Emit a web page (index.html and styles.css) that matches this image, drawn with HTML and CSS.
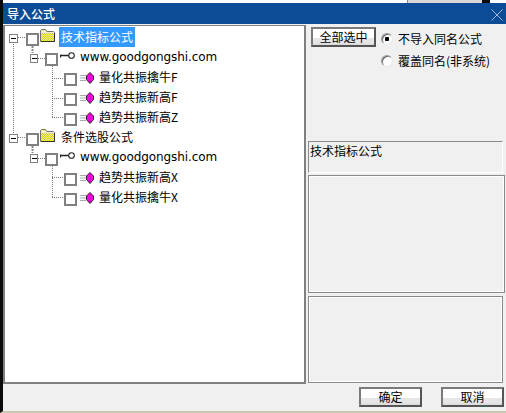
FILE: index.html
```html
<!DOCTYPE html>
<html lang="zh">
<head>
<meta charset="utf-8">
<title>导入公式</title>
<link rel="stylesheet" href="styles.css">
</head>
<body>
<svg width="0" height="0" class="defs" aria-hidden="true">
  <defs>
    <pattern id="dither" width="2" height="2" patternUnits="userSpaceOnUse">
      <rect width="2" height="2" fill="#ffff30"/>
      <rect width="1" height="1" fill="#c8c870"/>
      <rect x="1" y="1" width="1" height="1" fill="#c8c870"/>
    </pattern>
    <symbol id="folder" viewBox="0 0 15 13">
      <path d="M0.5 12.5V1.500L1.500 0.5H5.500L7 2.500H13.500L14.500 3.500V12.500Z" fill="url(#dither)" stroke="#707070"/>
      <path d="M1 1.500H5.500L6.500 3H14V4H1Z" fill="#efecd8"/>
      <path d="M14.500 4V12.500H1" fill="none" stroke="#333"/>
    </symbol>
    <symbol id="key" viewBox="0 0 15 7">
      <circle cx="11.500" cy="3.500" r="2.800" fill="#fff" stroke="#222" stroke-width="1.100"/>
      <path d="M0.500 2.500V5.500M0.500 3.500H8.500" stroke="#222" stroke-width="1.300" fill="none"/>
    </symbol>
    <symbol id="gem" viewBox="0 0 14 12">
      <path d="M0 3.500H6M0 6H6M0 8.500H6" stroke="#aaa" fill="none"/>
      <path d="M10 0.500L13.500 4V7.500L10 11.500L6.500 7.500V4Z" fill="#ff00e6" stroke="#222"/>
      <path d="M10 2V10" stroke="#a000a0" stroke-width="0.700" fill="none"/>
    </symbol>
  </defs>
</svg>
<div class="strip">
  <span class="strip-text">超势共振新高型</span>
  <span class="strip-box"></span>
</div>
<div class="titlebar">
  <span class="title">导入公式</span>
  <svg class="close" width="12" height="12" viewBox="0 0 12 12"><path d="M0.500 0.500L11.500 11.500M11.500 0.500L0.500 11.500" stroke="#9db8d6" fill="none"/></svg>
</div>
<main class="body">
  <div class="tree">
    <svg class="lines" width="299" height="356" viewBox="5 26 299 356">
      <path class="dots" d="M13.500 42V134M18 37.500H27M18 137.500H27M38 58.500H45M38 158.500H45M52.500 66V117.500M52 78.500H64M52 98.500H64M52 117.500H64M52.500 166V197.500M52 177.500H64M52 197.500H64"/>
      <path class="dots strong" d="M32.500 46V53M32.500 146V153"/>
    </svg>
    <div class="row root">
      <span class="exp"></span><span class="chk"></span>
      <svg class="ico-folder"><use href="#folder"/></svg>
      <span class="label sel">技术指标公式</span>
    </div>
    <div class="row site">
      <span class="exp"></span><span class="chk"></span>
      <svg class="ico-key"><use href="#key"/></svg>
      <span class="label url">www.goodgongshi.com</span>
    </div>
    <div class="row leaf"><span class="chk"></span><svg class="ico-gem"><use href="#gem"/></svg><span class="label">量化共振擒牛F</span></div>
    <div class="row leaf"><span class="chk"></span><svg class="ico-gem"><use href="#gem"/></svg><span class="label">趋势共振新高F</span></div>
    <div class="row leaf"><span class="chk"></span><svg class="ico-gem"><use href="#gem"/></svg><span class="label">趋势共振新高Z</span></div>
    <div class="row root">
      <span class="exp"></span><span class="chk"></span>
      <svg class="ico-folder"><use href="#folder"/></svg>
      <span class="label">条件选股公式</span>
    </div>
    <div class="row site">
      <span class="exp"></span><span class="chk"></span>
      <svg class="ico-key"><use href="#key"/></svg>
      <span class="label url">www.goodgongshi.com</span>
    </div>
    <div class="row leaf"><span class="chk"></span><svg class="ico-gem"><use href="#gem"/></svg><span class="label">趋势共振新高X</span></div>
    <div class="row leaf"><span class="chk"></span><svg class="ico-gem"><use href="#gem"/></svg><span class="label">量化共振擒牛X</span></div>
  </div>
  <aside class="side">
    <div class="controls">
      <button class="btn btn-all" type="button">全部选中</button>
      <div class="radios">
        <div class="radio-row"><span class="radio on"></span><span>不导入同名公式</span></div>
        <div class="radio-row"><span class="radio"></span><span>覆盖同名(非系统)</span></div>
      </div>
    </div>
    <div class="box box-info">技术指标公式</div>
    <div class="box box-mid"></div>
    <div class="box box-low"></div>
  </aside>
</main>
<footer class="actions">
  <button class="btn btn-act" type="button">确定</button>
  <button class="btn btn-act" type="button">取消</button>
</footer>
</body>
</html>
```
FILE: styles.css
```css
* { box-sizing: border-box; }
html, body { margin: 0; padding: 0; }
body {
  width: 506px;
  height: 413px;
  overflow: hidden;
  background: #f0f0f0;
  border-left: 3px solid #0a0a0a;
  border-bottom: 2px solid #c9c6b4;
  font: 12px/20px "Noto Sans CJK SC", "Liberation Sans", sans-serif;
  color: #000;
}
.defs { position: absolute; }
.strip {
  height: 3px;
  margin-left: -3px;
  background: #fff;
  display: flex;
  overflow: hidden;
  border-left: 3px solid #0a0a0a;
}
.strip-text {
  margin-left: 79px;
  margin-top: -17px;
  line-height: 20px;
  height: 20px;
}
.strip-box {
  margin-left: auto;
  margin-right: 16px;
  width: 83px;
  background: #d8d8d8;
  border-left: 1px solid #888;
  border-right: 8px solid #0a0a0a;
}
.titlebar {
  height: 21px;
  margin-left: -3px;
  background: #0c4c96;
  display: flex;
  align-items: center;
  justify-content: space-between;
  padding: 0 3px 0 7px;
  color: #fff;
}
.title { font-weight: 500; }
.close { margin-top: 2px; }
.body {
  display: flex;
  gap: 2px;
  height: 359px;
  padding-top: 1px;
}
.tree {
  position: relative;
  width: 303px;
  height: 359px;
  background: #fff;
  border: 1px solid #808080;
  border-width: 1px 2px 2px 2px;
  padding-top: 1px;
}
.lines { position: absolute; left: 0; top: 0; pointer-events: none; }
.dots { fill: none; stroke: #777; stroke-dasharray: 1 1; }
.dots.strong { stroke-width: 2; stroke-dasharray: 2 1; stroke: #888; }
.row { display: flex; align-items: flex-start; height: 20px; position: relative; }
.root { padding-left: 4px; }
.site { padding-left: 24px; }
.leaf { padding-left: 59px; }
.exp {
  width: 9px;
  height: 9px;
  margin-top: 7px;
  margin-right: 9px;
  background: linear-gradient(#000, #000) center / 5px 1px no-repeat #fff;
  border: 1px solid #808080;
}
.site .exp { margin-right: 7px; width: 8px; margin-left: 1px; margin-right: 7px; }
.chk {
  width: 13px;
  height: 13px;
  margin-top: 6px;
  background: #fff;
  border: 2px solid #808080;
}
.root .chk { margin-left: -1px; }
.ico-folder { width: 15px; height: 13px; margin-top: 2px; margin-left: 1px; }
.ico-key { width: 15px; height: 7px; margin: 5px 5px 0 2px; }
.ico-gem { width: 14px; height: 12px; margin: 5px 5px 0 3px; }
.root .label { margin-left: 4px; padding: 0 2px; }
.label { line-height: 20px; white-space: nowrap; }
.sel { background: #3399ff; color: #fff; }
.url { font-family: "DejaVu Sans", sans-serif; font-size: 12px; letter-spacing: -0.1px; }
.side { width: 197px; display: flex; flex-direction: column; }
.controls { height: 115px; display: flex; align-items: flex-start; padding: 2px 0 0 3px; }
.btn {
  font: inherit;
  color: #000;
  padding: 0;
  height: 20px;
  line-height: 16px;
  background: linear-gradient(#fff 0 55%, #e6e6e6 55% 85%, #d8d8d8);
  border: 2px solid #5a5a5a;
  border-color: #7a7a7a #555 #555 #7a7a7a;
}
.btn-all { width: 65px; }
.radios { margin-left: 5px; margin-top: 1px; }
.radio-row { display: flex; align-items: center; height: 22px; gap: 5px; }
.radio {
  width: 12px;
  height: 12px;
  border-radius: 50%;
  background: #fff;
  border: 1px solid #9a9a9a;
  border-right-color: #e8e8e8;
  border-bottom-color: #e8e8e8;
  box-shadow: inset 1px 1px 0 #666;
}
.radio.on { background: radial-gradient(circle, #000 0 2px, #fff 2.500px); }
.box { border: 1px solid #8a8a8a; box-shadow: inset 1px 1px 0 #fff, inset -1px -1px 0 #fff; }
.box-info {
  width: 195px;
  height: 32px;
  border-color: #8a8a8a #fff #fff #8a8a8a;
  box-shadow: none;
  line-height: 18px;
  padding-left: 1px;
  margin-top: 1px;
}
.box-mid { width: 197px; height: 119px; margin-top: 2px; }
.box-low { width: 195px; height: 87px; margin-top: 3px; }
.actions {
  display: flex;
  justify-content: flex-end;
  gap: 19px;
  padding: 4px 2px 0 0;
}
.btn-act { width: 63px; }
```
